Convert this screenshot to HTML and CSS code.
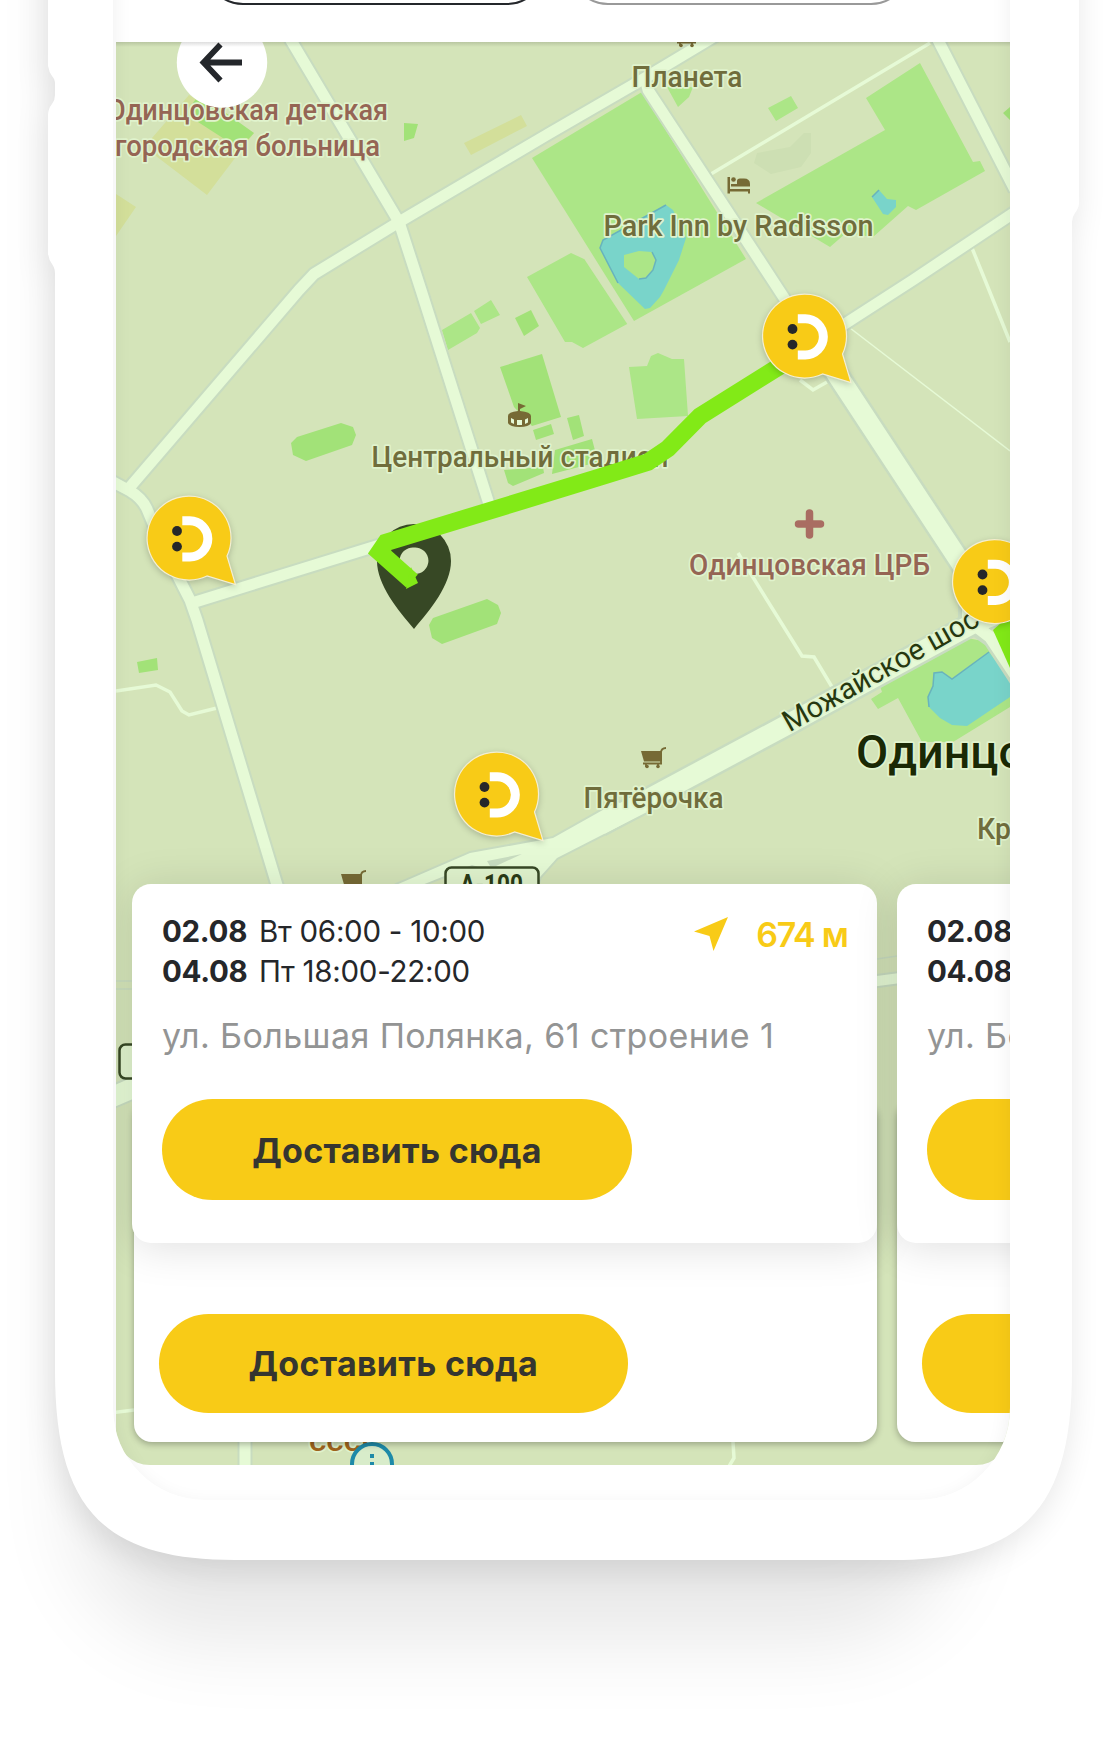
FILE: index.html
```html
<!DOCTYPE html>
<html lang="ru">
<head>
<meta charset="utf-8">
<title>Карта доставки</title>
<link rel="stylesheet" href="styles.css">
</head>
<body>
<svg class="phone" viewBox="0 0 1110 1755" aria-hidden="true">
  <defs>
    <filter id="soft" x="-20%" y="-20%" width="140%" height="140%"><feGaussianBlur stdDeviation="42"/></filter>
    <filter id="near" x="-20%" y="-20%" width="140%" height="140%"><feGaussianBlur stdDeviation="16"/></filter>
    <path id="shell" d="M48,-60V66Q49,72 52,76Q55,79 55,84V95Q55,100 52,104Q48,109 48,115V254Q49,260 52,264Q55,268 55,274V1370C55,1505 100,1560 235,1560H892C1027,1560 1072,1505 1072,1370V222Q1072,217 1075,213Q1079,208 1079,203V-60Z"/>
  </defs>
  <rect x="76" y="-200" width="880" height="1840" rx="130" fill="#000" opacity=".09" filter="url(#soft)"/>
  <use href="#shell" x="-3" y="9" fill="#000" opacity=".1" filter="url(#near)"/>
  <use href="#shell" fill="#fff"/>
</svg>

<main class="screen">
  <header class="tabs">
    <div class="tab tab-active"></div>
    <div class="tab"></div>
  </header>

  <section class="map">
    <svg class="map-canvas" viewBox="116 42 894 1423">
      <defs>
        <g id="pin">
          <path class="pin-body" d="M38,18A42,42 0 1 0 18,38L46.5,46.5Z"/>
          <path d="M-6.7,-17.2H.8A18,18 0 0 1 .8,18.9H-6.7" fill="none" stroke="#fff" stroke-width="9"/>
          <circle cx="-12" cy="-7" r="4.9" fill="#25272a"/>
          <circle cx="-12" cy="8.6" r="4.9" fill="#25272a"/>
        </g>
        <g id="cart">
          <path d="M0,4H21V14.500H3Z"/>
          <path d="M20,15.500V6Q20,1 25,1M2,16.500H21M5,17V20M17,17V20" fill="none" stroke="#766a35" stroke-width="1.800"/>
          <circle cx="6" cy="19.500" r="1.800"/><circle cx="17" cy="19.500" r="1.800"/>
        </g>
        <g id="roads">
          <path d="M286,31L292,42L399,222L421,290L489,504"/>
          <path d="M740,21L645,78L550,133L399,222L314,274L299,290L130,487"/>
          <path d="M100,475L130,491Q142,498 147,509L162,545L190,600L197,620L277,885L285,920"/>
          <path d="M192,603L386,543"/>
          <path d="M645,78L648,90L775,284L805,330"/>
          <path d="M820,340L913,280L1015,212"/>
          <path d="M933,30L939,42L1015,190"/>
          <path d="M245,1430V1480"/>
        </g>
        <g id="wide-roads">
          <path d="M815,340L840,379L957,557L985,600"/>
          <path d="M995,615L972,624L783,727L600,825"/>
        </g>
        <path id="junction" d="M617,802L553,838L470,853L396,885H422L472,865L478,867L535,893L540,877L557,858L647,812Z"/>
      </defs>

      <g fill="#d3df9a">
        <path d="M152,138L189,95L254,133L207,195L152,153ZM116,194L136,207L116,236ZM464,143L521,115L527,126L471,155Z"/>
      </g>
      <path fill="#cddfb3" d="M757,153L790,147L804,133H811V153L801,167L771,174L754,163Z"/>
      <g fill="#ace687">
        <path d="M532,158L642,92L746,259L634,321Z"/>
        <path d="M527,277L571,253L584,259L589,258L629,323L583,348L572,342H565Z"/>
        <path d="M920,63L973,162L980,161L985,171L916,210L908,206L873,237L846,233L830,247L756,203L885,130L866,98Z"/>
        <path d="M768,108L791,96L798,108L776,121ZM667,87H693L689,97L678,107Z"/>
        <path d="M442,330L471,313L480,328L477,333L448,350ZM474,311L491,300L500,315L481,324Z"/>
        <path d="M629,367L647,366L651,356L658,353L672,359H684L688,416L637,419Z"/>
        <path d="M871,699L882,692L880,686L967,638L988,642L1010,672V707L953,742H922L898,698L878,709Z"/>
      </g>
      <path d="M584,254L631,325" stroke="#d4e4b9" stroke-width="5"/>
      <g fill="#a2e278">
        <path d="M193,103L198,96L205,98L254,133L243,145L229,142L198,122ZM404,123L418,124L414,138L404,141ZM1003,113L1010,107V120Z"/>
        <path d="M515,318L531,310L539,326L524,336ZM500,367L542,354L561,417L532,426L514,407Z"/>
        <path d="M533,430L551,424L554,434L536,440ZM567,418L579,415L584,436L573,440ZM555,450L592,439L598,462L552,474ZM504,470L543,467L544,473L513,486L508,483Z"/>
        <path d="M291,443L297,437L341,423L353,427L356,435L352,445L306,461L293,455ZM429,625L433,618L487,599L498,605L501,613L497,624L442,644L432,638ZM137,662L157,658L158,670L139,673Z"/>
      </g>
      <g fill="#79d4ca">
        <path d="M666,205L673,210L686,238L679,260L664,290L660,297L650,308L645,309L618,283L600,248L603,240Z"/>
        <path d="M879,190L887,199L896,200V207L888,215L883,214L872,197Z"/>
        <path d="M934,673L942,672L952,679L989,652L1010,680V697L967,726L952,725L940,718L929,707L928,697L933,686Z"/>
      </g>
      <path fill="#ace687" d="M624,255L639,251L652,252L656,260L653,270L646,278L639,279L624,267Z"/>
      <path class="shore" d="M618,283L600,248L603,240L666,205M652,252L656,260L653,270L646,278L639,279M872,197L879,190M929,707L928,697L933,686L934,673L942,672L952,679L989,652"/>

      <g class="lane">
        <path d="M930,43L711,174M972,248L985,280L1010,342M738,553L767,600L802,656L814,657L832,687M116,691L156,685L170,692L182,711L189,715L217,708M800,380L813,390L827,382"/>
        <path d="M110,1413L134,1410M733,1442L734,1458L728,1468"/>
        <path d="M850,328L1010,451" stroke-width="1.5"/>
      </g>

      <g class="casing">
        <use href="#roads" stroke-width="15"/>
        <use href="#wide-roads" stroke-width="25"/>
        <path d="M965,600V622L990,640L1020,686" stroke-width="14"/>
        <use href="#junction" stroke-width="4"/>
        <path d="M105,1100L140,1085" stroke-width="24"/>
        <path d="M870,982L900,978" stroke-width="14"/>
        <path d="M116,981H134M116,989H134M877,959L897,956" stroke-width="1.500"/>
      </g>
      <g class="surface">
        <use href="#roads" stroke-width="11"/>
        <use href="#wide-roads" stroke-width="20"/>
        <path d="M968,600V620L990,637L1020,682" stroke-width="12"/>
        <use href="#junction" fill="#e6fad6" stroke-width="0"/>
        <path d="M105,1100L140,1085" stroke-width="20"/>
        <path d="M870,982L900,978" stroke-width="10"/>
      </g>
      <path fill="#c8dcc0" d="M487,861L522,854L496,866H490Z"/>

      <!-- points of interest -->
      <g class="poi">
        <use href="#cart" x="641" y="747"/>
        <use href="#cart" x="341" y="870"/>
        <use href="#cart" x="675" y="26"/>
        <path d="M727.500,177H730V189H750V193.500H748V191.500H730V193.500H727.500Z"/>
        <circle cx="733.500" cy="179.500" r="2.300"/>
        <path d="M737,186V181Q737,178.500 740,178.500H744Q750,178.500 750,184V186.500H731V184H737Z"/>
        <path d="M518,403L526,406L520,409V411Q531,412 531,416V423Q529,427 519.500,427T508,423V416Q508,412 518,411Z"/>
        <path fill="#e6fad6" d="M511,418L514,419.500V424L511,422.500ZM517,420H522V425H517ZM525,419.500L528,418V422.500L525,424Z"/>
      </g>
      <path d="M809.500,513V535M798.500,524H820.500" stroke="#a96d62" stroke-width="7.500" stroke-linecap="round"/>

      <g class="label label-health">
        <text x="107" y="119.500" textLength="281" lengthAdjust="spacingAndGlyphs">Одинцовская детская</text>
        <text x="115" y="155.500" textLength="265" lengthAdjust="spacingAndGlyphs">городская больница</text>
        <text x="689" y="574.500" textLength="241" lengthAdjust="spacingAndGlyphs">Одинцовская ЦРБ</text>
      </g>
      <g class="label">
        <text x="631.500" y="87" textLength="111" lengthAdjust="spacingAndGlyphs">Планета</text>
        <text x="603.500" y="235.500" textLength="270" lengthAdjust="spacingAndGlyphs">Park Inn by Radisson</text>
        <text x="371.500" y="467" textLength="297" lengthAdjust="spacingAndGlyphs">Центральный стадион</text>
        <text x="583.500" y="807.500" textLength="140" lengthAdjust="spacingAndGlyphs">Пятёрочка</text>
        <text x="977" y="838.500" textLength="34" lengthAdjust="spacingAndGlyphs">Кр</text>
      </g>
      <text class="label label-road" transform="translate(789.500 732.500) rotate(-29.400)" textLength="220" lengthAdjust="spacingAndGlyphs">Можайское шос</text>
      <text class="label label-city" x="856" y="768" textLength="222" lengthAdjust="spacingAndGlyphs">Одинцово</text>
      <text class="label label-landmark" x="309" y="1451" textLength="66" lengthAdjust="spacingAndGlyphs">сссг</text>

      <g class="shield">
        <rect x="445.500" y="867.500" width="93" height="36" rx="6"/>
        <rect x="119.500" y="1044.500" width="60" height="34" rx="6"/>
      </g>
      <text class="shield-text" x="460" y="894" textLength="63" lengthAdjust="spacingAndGlyphs">А-100</text>

      <circle cx="372" cy="1464" r="20" fill="#d8ecca" stroke="#1e8aa8" stroke-width="4"/>
      <path d="M370,1454h4v4h-4zM370,1462h4v4h-4z" fill="#1e8aa8"/>

      <path fill="#374825" fill-rule="evenodd" d="M414,524A37,37 0 0 1 451,561C451,585 430,610 414,629C398,610 377,585 377,561A37,37 0 0 1 414,524ZM414,547.500A13.300,13.300 0 1 0 414,574A13.300,13.300 0 1 0 414,547.500Z"/>
      <path class="route" d="M812,346L700,416L668,448.500L648,462L600,477L386,542.500L379.500,552L412,581"/>
      <path fill="#82ea17" d="M406,589L418,583L411,567Z"/>
      <path fill="#82ea17" d="M993,630L1010,615V668Z"/>

      <use href="#pin" x="189" y="538"/>
      <use href="#pin" x="804.500" y="336"/>
      <use href="#pin" x="994.500" y="581.500"/>
      <use href="#pin" x="496.500" y="794"/>

      <circle cx="222" cy="62.500" r="45.200" fill="#fff"/>
      <path d="M242,62.500H205M220.500,44.500L203.500,62.500L220.500,80.500" fill="none" stroke="#24272b" stroke-width="5.800"/>
    </svg>

    <div class="row row-back">
      <article class="card-back"><button class="btn btn-back">Доставить сюда</button></article>
      <article class="card-back"><button class="btn btn-back"></button></article>
    </div>

    <div class="row row-front">
      <article class="card">
        <div class="card-top">
          <dl class="slots">
            <div class="slot"><dt>02.08</dt><dd>Вт 06:00 - 10:00</dd></div>
            <div class="slot"><dt>04.08</dt><dd>Пт 18:00-22:00</dd></div>
          </dl>
          <div class="distance">
            <svg class="distance-icon" viewBox="0 0 34 34"><path fill="#f8cb17" d="M34,0L19.500,34L15.500,19L0,14.500Z"/></svg>
            <span>674 м</span>
          </div>
        </div>
        <p class="address">ул. Большая Полянка, 61 строение 1</p>
        <button class="btn">Доставить сюда</button>
      </article>
      <article class="card">
        <div class="card-top">
          <dl class="slots">
            <div class="slot"><dt>02.08</dt></div>
            <div class="slot"><dt>04.08</dt></div>
          </dl>
        </div>
        <p class="address">ул. Большая</p>
        <button class="btn"></button>
      </article>
    </div>
  </section>
</main>
</body>
</html>
```
FILE: styles.css
```css
* { box-sizing: border-box; }

body {
  position: relative;
  width: 1110px;
  height: 1755px;
  margin: 0;
  overflow: hidden;
  background: #fff;
  font-family: Inter, "Noto Sans", sans-serif;
  color: #25272a;
}

.phone {
  position: absolute;
  inset: 0;
  width: 1110px;
  height: 1755px;
}

.screen {
  position: relative;
  display: flex;
  flex-direction: column;
  width: 897px;
  height: 1500px;
  margin-left: 113px;
  overflow: hidden;
  border-radius: 0 0 92px 92px;
  background: #fff;
}

/* soft inner shade of the bezel */
.screen::after {
  content: "";
  position: absolute;
  inset: -60px 0 0;
  border-radius: 0 0 92px 92px;
  box-shadow: inset 0 6px 20px rgba(0, 0, 0, .07);
  pointer-events: none;
}

.tabs {
  display: flex;
  align-items: flex-end;
  gap: 25px;
  height: 42px;
  padding: 0 101px 37px 92px;
  flex: none;
}

.tab {
  flex: 1;
  height: 76px;
  border: 2.500px solid #999;
  border-radius: 38px;
}

.tab-active { border-color: #24272b; }

.map {
  position: relative;
  flex: none;
  width: 894px;
  height: 1423px;
  margin-left: 3px;
  overflow: hidden;
  border-radius: 0 0 34px 34px;
  background: #d4e4b9;
}

.map::before {
  content: "";
  position: absolute;
  z-index: 1;
  inset: 0 0 auto;
  height: 5px;
  background: linear-gradient(rgba(0, 0, 0, .13), transparent);
}

.map-canvas { display: block; width: 894px; height: 1423px; }

.casing { fill: none; stroke: #c8dcc0; stroke-linejoin: round; }
.surface { fill: none; stroke: #e6fad6; stroke-linejoin: round; }
.lane { fill: none; stroke: #e6fad6; stroke-width: 3.500; }
.shore { fill: none; stroke: #68b3bd; stroke-width: 1.500; }
.route { fill: none; stroke: #82ea17; stroke-width: 17.500; }
.poi { fill: #766a35; }

.pin-body {
  fill: #f8cb17;
  stroke: #f3eed2;
  stroke-width: 1.200;
  filter: drop-shadow(0 2px 3px rgba(0, 0, 0, .2));
}

.label {
  font: 500 29.500px Roboto, sans-serif;
  fill: #706d3c;
  stroke: #e0f3cd;
  stroke-width: 3.500px;
  stroke-linejoin: round;
  paint-order: stroke;
}

.label-health { fill: #956554; }
.label-road { font-weight: 400; fill: #26380f; }
.label-city { font-size: 47px; fill: #1a2905; }
.label-landmark { fill: #a0641c; }

.shield { fill: #e0f3cd; stroke: #374825; stroke-width: 2.500px; }
.shield-text { font: 700 27px Roboto, sans-serif; fill: #2a3b16; }

.row {
  position: absolute;
  display: flex;
}

.row-back { left: 18px; top: 1058px; gap: 20px; }
.row-front { left: 16px; top: 842px; gap: 20.500px; }

.card-back {
  display: flex;
  flex: none;
  flex-direction: column;
  align-items: flex-start;
  justify-content: flex-end;
  width: 742.500px;
  height: 342px;
  padding: 0 25px 29.500px;
  border-radius: 18px;
  background: #fff;
  box-shadow: 0 2px 7px rgba(0, 0, 0, .3);
}

.card {
  display: flex;
  flex: none;
  flex-direction: column;
  align-items: flex-start;
  width: 744.500px;
  height: 358.500px;
  padding: 27px 29px 0 30px;
  border-radius: 19px;
  background: #fff;
  box-shadow: 0 4px 44px rgba(0, 0, 0, .13);
}

.card-top {
  display: flex;
  justify-content: space-between;
  width: 100%;
}

.slots { margin: 0; }

.slot {
  display: flex;
  gap: 12px;
  font-size: 29.500px;
  line-height: 40.400px;
}

.slot dt { width: 85px; font-weight: 700; letter-spacing: -.3px; }
.slot dd { margin: 0; font-weight: 400; letter-spacing: -.27px; white-space: nowrap; }

.distance {
  display: flex;
  align-items: flex-start;
  gap: 28px;
  padding-top: 3px;
  font-size: 34px;
  font-weight: 600;
  line-height: 42px;
  letter-spacing: -1.300px;
  color: #f8cb17;
}

.distance-icon { width: 34px; height: 34px; margin-top: 3px; }

.address {
  margin: 23.500px 0 0;
  font-size: 34px;
  line-height: 42px;
  letter-spacing: .4px;
  color: #939494;
  white-space: nowrap;
}

.btn {
  width: 470px;
  height: 101px;
  margin-top: 41.500px;
  padding: 3px 0 0;
  border: 0;
  border-radius: 51px;
  background: #f8cb17;
  color: #353530;
  font: 700 34px Inter, sans-serif;
  letter-spacing: .3px;
}

.btn-back { width: 468.500px; height: 98.500px; margin: 0; padding: 0; }
```
